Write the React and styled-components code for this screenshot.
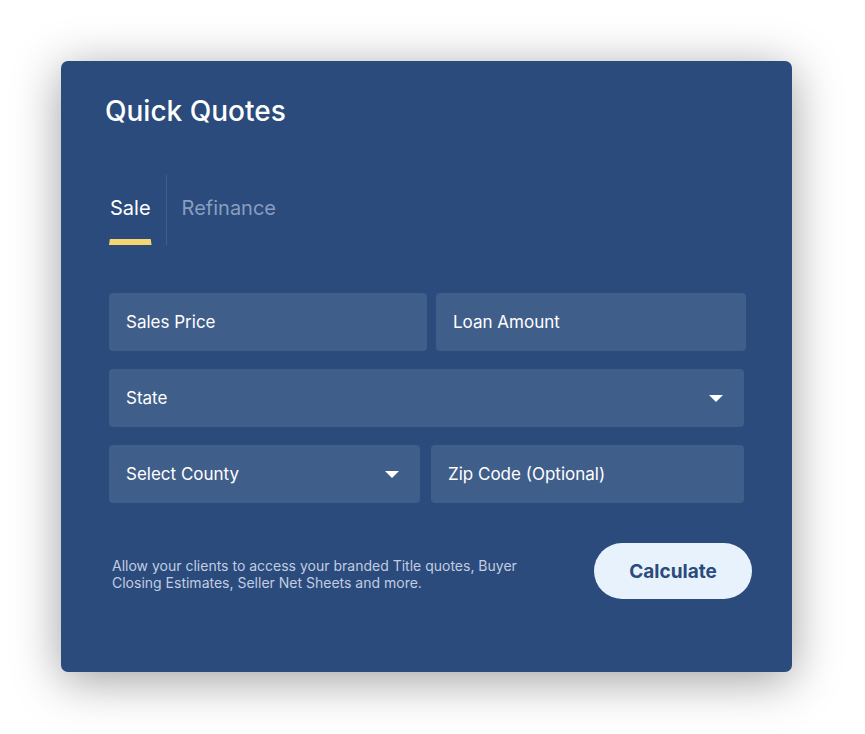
import React from 'react';
import styled, { createGlobalStyle } from 'styled-components';

const GlobalStyle = createGlobalStyle`
  html, body {
    margin: 0;
    padding: 0;
    background: #ffffff;
  }
  body {
    font-family: Inter, "Noto Sans", sans-serif;
  }
`;

const Page = styled.div`
  padding: 61px 73px 62px 61px;
`;

const Card = styled.section`
  box-sizing: border-box;
  width: 731px;
  height: 611px;
  padding: 33px 44px 0 44px;
  background: #2a4b7c;
  border-radius: 7px;
  box-shadow: 0 8px 48px rgba(0, 0, 0, 0.38);
  color: #ffffff;
`;

const Title = styled.h1`
  margin: 0;
  font-size: 28px;
  line-height: 34px;
  font-weight: 500;
`;

const TabList = styled.div`
  display: flex;
  align-items: stretch;
  height: 70px;
  margin: 47px 0 0 4px;
`;

const Tab = styled.div`
  position: relative;
  display: flex;
  align-items: center;
  padding: 0 ${({ $first }) => ($first ? '15px 4px 1px' : '0 4px 15px')};
  font-size: 20px;
  color: ${({ $active }) => ($active ? '#ffffff' : '#8a9dbf')};

  &::after {
    content: '';
    display: ${({ $active }) => ($active ? 'block' : 'none')};
    position: absolute;
    left: 0;
    right: ${({ $first }) => ($first ? '14px' : '0')};
    bottom: 0;
    height: 6px;
    background: #f6d46f;
    clip-path: polygon(2% 0, 98% 0, 100% 100%, 0 100%);
  }
`;

const TabDivider = styled.div`
  width: 1px;
  background: #3f5e8c;
`;

const Form = styled.div`
  display: flex;
  flex-direction: column;
  gap: 18px;
  margin: 48px 0 0 4px;
`;

const Row = styled.div`
  display: flex;
  gap: ${({ $gap }) => $gap}px;
`;

const Field = styled.div`
  box-sizing: border-box;
  display: flex;
  align-items: center;
  justify-content: space-between;
  width: ${({ $w }) => $w}px;
  height: 58px;
  padding: 0 17px;
  background: #405e8a;
  border-radius: 4px;
  font-size: 17px;
  color: #ffffff;
`;

const Caret = styled.span`
  width: 0;
  height: 0;
  margin-right: 4px;
  border-left: 7px solid transparent;
  border-right: 7px solid transparent;
  border-top: 7px solid #ffffff;
`;

const Footer = styled.div`
  display: flex;
  align-items: center;
  justify-content: space-between;
  margin: 40px -4px 0 7px;
`;

const Note = styled.p`
  margin: 5px 0 0;
  width: 440px;
  font-size: 14px;
  line-height: 17px;
  color: #c2cde0;
`;

const Button = styled.button`
  width: 158px;
  height: 56px;
  border: none;
  border-radius: 28px;
  background: #e8f2fd;
  color: #2a4b7c;
  font-family: Inter, "Noto Sans", sans-serif;
  font-size: 19px;
  font-weight: 700;
  cursor: pointer;
`;

export default function App() {
  return (
    <>
      <GlobalStyle />
      <Page>
        <Card>
          <Title>Quick Quotes</Title>
          <TabList>
            <Tab $first $active>Sale</Tab>
            <TabDivider />
            <Tab>Refinance</Tab>
          </TabList>
          <Form>
            <Row $gap={9}>
              <Field $w={318}>Sales Price</Field>
              <Field $w={310}>Loan Amount</Field>
            </Row>
            <Row $gap={0}>
              <Field $w={635}>
                State
                <Caret />
              </Field>
            </Row>
            <Row $gap={11}>
              <Field $w={311}>
                Select County
                <Caret />
              </Field>
              <Field $w={313}>Zip Code (Optional)</Field>
            </Row>
          </Form>
          <Footer>
            <Note>
              Allow your clients to access your branded Title quotes, Buyer
              <br />
              Closing Estimates, Seller Net Sheets and more.
            </Note>
            <Button type="button">Calculate</Button>
          </Footer>
        </Card>
      </Page>
    </>
  );
}
